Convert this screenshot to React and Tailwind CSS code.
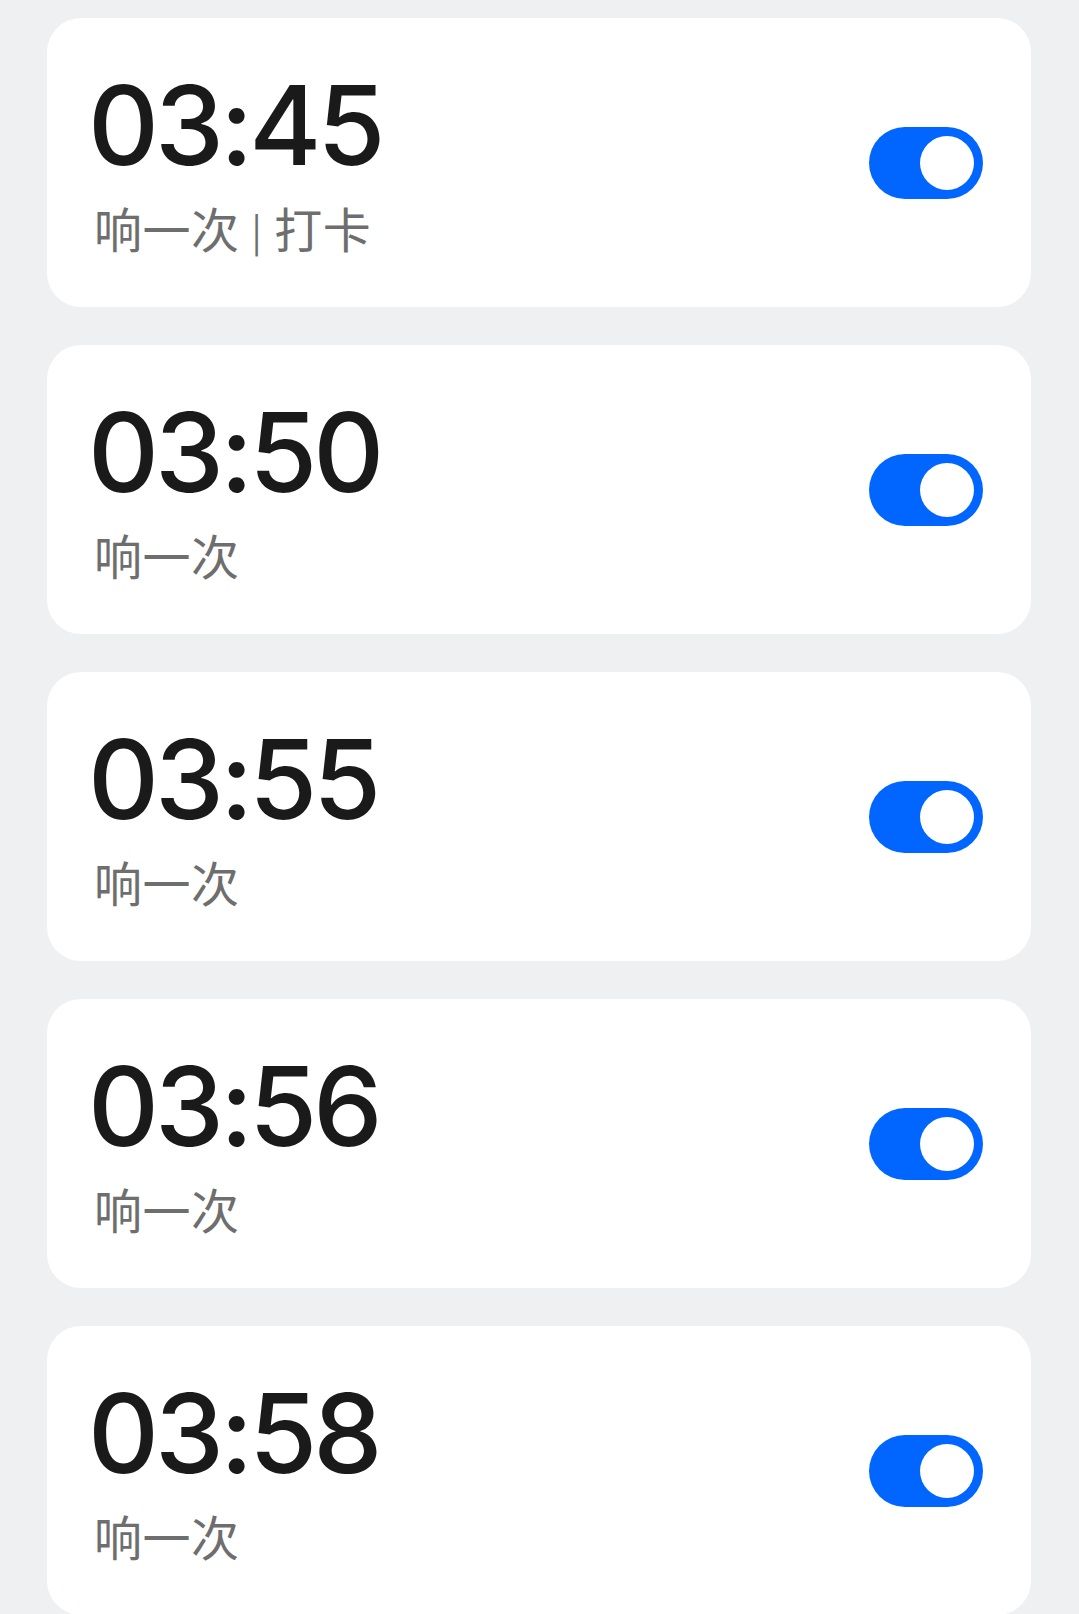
const alarms = [
  { time: "03:45", label: ["响一次", "打卡"] },
  { time: "03:50", label: ["响一次"] },
  { time: "03:55", label: ["响一次"] },
  { time: "03:56", label: ["响一次"] },
  { time: "03:58", label: ["响一次"] },
];

function Toggle() {
  return (
    <div className="flex h-[72px] w-[114px] items-center justify-end rounded-full bg-[#0066ff] pr-[9px]">
      <div className="h-[54px] w-[54px] rounded-full bg-white" />
    </div>
  );
}

function AlarmCard({ time, label }) {
  return (
    <div className="flex h-[289px] items-center justify-between rounded-[34px] bg-white pl-[41px] pr-[48px]">
      <div className="self-start pt-[52px]">
        <div className="font-['Inter',sans-serif] text-[110px] font-medium leading-none tracking-[-4px] text-[#1a1a1a]">
          {time}
        </div>
        <div className="ml-[6px] mt-[23px] flex items-center font-['Noto_Sans_CJK_SC','Noto_Sans',sans-serif] text-[48px] font-normal leading-none tracking-[0.5px] text-[#6e6e6e]">
          <span>{label[0]}</span>
          {label[1] && (
            <>
              <span className="mx-[12px] mt-[6px] text-[38px]">|</span>
              <span>{label[1]}</span>
            </>
          )}
        </div>
      </div>
      <Toggle />
    </div>
  );
}

export default function App() {
  return (
    <div className="min-h-[1614px] bg-[#eff0f2] pl-[47px] pr-[48px] pt-[18px]">
      <div className="flex flex-col gap-[38px]">
        {alarms.map((a) => (
          <AlarmCard key={a.time} time={a.time} label={a.label} />
        ))}
      </div>
    </div>
  );
}
